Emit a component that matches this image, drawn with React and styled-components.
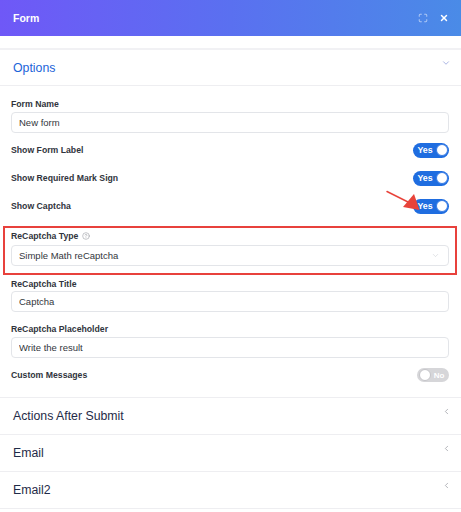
import React from 'react'
import styled, { createGlobalStyle } from 'styled-components'
import { Maximize, X, ChevronDown, ChevronLeft, CircleHelp } from 'lucide-react'

const GlobalStyle = createGlobalStyle`
  body {
    margin: 0;
    background: #fff;
    font-family: "Liberation Sans", Arial, sans-serif;
  }
`

const Page = styled.div`
  position: relative;
  width: 100%;
`

const Header = styled.div`
  display: flex;
  align-items: center;
  height: 36px;
  padding: 0 12px 0 13px;
  background: linear-gradient(90deg, #6f58f7 0%, #5a70f0 50%, #4a8be7 100%);
`

const Title = styled.div`
  color: #fff;
  font-size: 10.5px;
  font-weight: 700;
`

const HeaderTools = styled.div`
  display: flex;
  align-items: center;
  gap: 11px;
  margin-left: auto;
  color: #fff;
`

const Spacer = styled.div`
  height: 12px;
  border-bottom: 2px solid #f1f1f4;
`

const SectionHead = styled.div`
  display: flex;
  align-items: center;
  height: ${p => p.$h || 36}px;
  padding: 0 10px 0 13px;
  border-bottom: 1px solid #eeeef1;
  font-size: 12.3px;
  color: ${p => (p.$active ? '#1b64d9' : '#1f2b48')};
`

const Chevron = styled.span`
  display: flex;
  margin-left: auto;
  margin-bottom: 9px;
  color: ${p => (p.$active ? '#7f90d4' : '#85878e')};
`

const Body = styled.div`
  padding: 12px 12px 8px 11px;
  border-bottom: 1px solid #eeeef1;
`

const Field = styled.div`
  margin-top: ${p => p.$top || 0}px;
`

const Label = styled.div`
  display: flex;
  align-items: center;
  gap: 4px;
  height: 12px;
  margin-bottom: ${p => (p.$gap === undefined ? 2 : p.$gap)}px;
  font-size: 8.7px;
  font-weight: 700;
  color: #30343c;
`

const Input = styled.input`
  display: block;
  box-sizing: border-box;
  width: 100%;
  height: 21px;
  margin: 0;
  padding: 0 7px;
  border: 1px solid #e3e5e9;
  border-radius: 4px;
  background: #fff;
  font-family: inherit;
  font-size: 9.5px;
  color: #33363c;
  outline: none;
`

const Select = styled.div`
  display: flex;
  align-items: center;
  box-sizing: border-box;
  height: 21px;
  padding: 0 8px 0 7px;
  border: 1px solid #e3e5e9;
  border-radius: 4px;
  font-size: 9.5px;
  color: #33363c;

  svg {
    margin-left: auto;
  }
`

const ToggleRow = styled.div`
  display: flex;
  align-items: center;
  justify-content: space-between;
  height: 28px;
  margin-top: ${p => p.$top || 0}px;
`

const Toggle = styled.div`
  display: flex;
  flex-direction: ${p => (p.$on ? 'row' : 'row-reverse')};
  align-items: center;
  box-sizing: border-box;
  width: ${p => (p.$on ? 36 : 32)}px;
  height: ${p => (p.$on ? 15 : 14)}px;
  padding: 0 1.5px;
  border-radius: 8px;
  background: ${p => (p.$on ? '#1f6de0' : '#d6d6d9')};
  color: #fff;
  font-size: ${p => (p.$on ? 8.8 : 8)}px;
  font-weight: 700;
`

const ToggleText = styled.span`
  flex: 1;
  text-align: center;
`

const Knob = styled.span`
  box-sizing: border-box;
  width: 12px;
  height: 12px;
  border-radius: 50%;
  background: #fff;
  border: 1px solid ${p => (p.$on ? '#3b7ee6' : '#c4c4c8')};
`

const Highlight = styled.div`
  margin: 6px -8px 0 -8px;
  padding: 2px 6px 7px;
  border: 2px solid #e8413c;
`

const Arrow = styled.svg`
  position: absolute;
  left: 380px;
  top: 185px;
  pointer-events: none;
`

function Switch({ on }) {
  return (
    <Toggle $on={on}>
      <ToggleText>{on ? 'Yes' : 'No'}</ToggleText>
      <Knob $on={on} />
    </Toggle>
  )
}

function Section({ title, active, h }) {
  return (
    <SectionHead $active={active} $h={h}>
      {title}
      <Chevron $active={active}>
        {active ? <ChevronDown size={10} strokeWidth={1.6} /> : <ChevronLeft size={9} strokeWidth={1.6} />}
      </Chevron>
    </SectionHead>
  )
}

export default function App() {
  return (
    <Page>
      <GlobalStyle />
      <Header>
        <Title>Form</Title>
        <HeaderTools>
          <Maximize size={10} strokeWidth={2} opacity={0.7} />
          <X size={10} strokeWidth={3.5} />
        </HeaderTools>
      </Header>
      <Spacer />

      <Section title="Options" active h={35} />

      <Body>
        <Field>
          <Label>Form Name</Label>
          <Input defaultValue="New form" readOnly />
        </Field>

        <ToggleRow $top={3}>
          <Label $gap={0}>Show Form Label</Label>
          <Switch on />
        </ToggleRow>
        <ToggleRow>
          <Label $gap={0}>Show Required Mark Sign</Label>
          <Switch on />
        </ToggleRow>
        <ToggleRow>
          <Label $gap={0}>Show Captcha</Label>
          <Switch on />
        </ToggleRow>

        <Highlight>
          <Label $gap={3}>
            ReCaptcha Type
            <CircleHelp size={8} strokeWidth={1.5} color="#8a8d94" />
          </Label>
          <Select>
            Simple Math reCaptcha
            <ChevronDown size={9} strokeWidth={1.3} color="#c3c7ce" />
          </Select>
        </Highlight>

        <Field $top={3}>
          <Label $gap={1}>ReCaptcha Title</Label>
          <Input defaultValue="Captcha" readOnly />
        </Field>

        <Field $top={11}>
          <Label>ReCaptcha Placeholder</Label>
          <Input defaultValue="Write the result" readOnly />
        </Field>

        <ToggleRow $top={3}>
          <Label $gap={0}>Custom Messages</Label>
          <Switch on={false} />
        </ToggleRow>
      </Body>

      <Section title="Actions After Submit" />
      <Section title="Email" />
      <Section title="Email2" />

      <Arrow width="45" height="30" viewBox="380 185 45 30">
        <line x1="387" y1="191.5" x2="410" y2="203" stroke="#e8433a" strokeWidth="1.5" strokeLinecap="round" />
        <polygon points="419.5,210 403,207 414,194" fill="#e8433a" />
      </Arrow>
    </Page>
  )
}
